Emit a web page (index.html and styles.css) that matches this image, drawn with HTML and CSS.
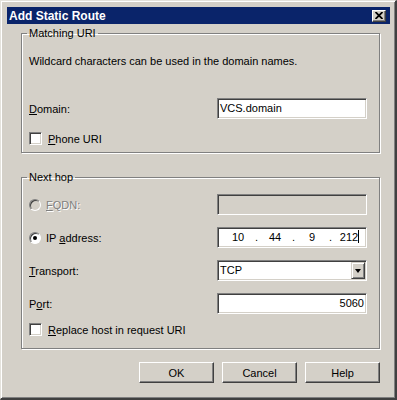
FILE: index.html
```html
<!DOCTYPE html>
<html lang="en">
<head>
    <meta charset="UTF-8">
    <meta name="viewport" content="width=device-width, initial-scale=1.0">
    <title>Add Static Route</title>
    <link rel="stylesheet" href="styles.css">
</head>
<body>
    <div class="window">
        <div class="titlebar">
            <span class="title">Add Static Route</span>
            <span class="close">
                <svg width="8" height="7" viewBox="0 0 8 7">
                    <path d="M0.5 0 L7.5 7 M7.5 0 L0.5 7" stroke="#000" stroke-width="1.8" fill="none"/>
                </svg>
            </span>
        </div>
        <div class="content">
            <fieldset class="group group-uri">
                <legend>Matching URI</legend>
                <p class="note">Wildcard characters can be used in the domain names.</p>
                <div class="row row-domain">
                    <label class="label"><span><u>D</u>omain:</span></label>
                    <div class="field"><span class="value">VCS.domain</span></div>
                </div>
                <label class="check"><span class="box"></span><span><u>P</u>hone URI</span></label>
            </fieldset>

            <fieldset class="group group-hop">
                <legend>Next hop</legend>
                <div class="rows">
                    <div class="row">
                        <label class="label disabled"><span class="radio"></span><span><u>F</u>QDN:</span></label>
                        <div class="field field-disabled"></div>
                    </div>
                    <div class="row">
                        <label class="label"><span class="radio"><span class="dot"></span></span><span>IP <u>a</u>ddress:</span></label>
                        <div class="field ip">
                            <span class="octet">10</span><span class="sep">.</span>
                            <span class="octet">44</span><span class="sep">.</span>
                            <span class="octet">9</span><span class="sep">.</span>
                            <span class="octet">212<span class="caret"></span></span>
                        </div>
                    </div>
                    <div class="row">
                        <label class="label"><span><u>T</u>ransport:</span></label>
                        <div class="field select">
                            <span class="value">TCP</span>
                            <span class="drop"><span class="arrow"></span></span>
                        </div>
                    </div>
                    <div class="row">
                        <label class="label"><span>P<u>o</u>rt:</span></label>
                        <div class="field number"><span class="value">5060</span></div>
                    </div>
                </div>
                <label class="check check-replace"><span class="box"></span><span><u>R</u>eplace host in request URI</span></label>
            </fieldset>

            <div class="buttons">
                <button class="btn">OK</button>
                <button class="btn">Cancel</button>
                <button class="btn">Help</button>
            </div>
        </div>
    </div>
</body>
</html>
```

FILE: styles.css
```css
body {
    margin: 0;
    background: #d4d0c8;
    font-family: "Liberation Sans", Arial, sans-serif;
    font-size: 11px;
    color: #000;
}
.window {
    width: 397px;
    height: 400px;
    box-sizing: border-box;
    background: #d4d0c8;
    border-style: solid;
    border-width: 1px 2px 2px 1px;
    border-color: #e4e2dc #404040 #404040 #e4e2dc;
    box-shadow: inset 1px 1px #fff, inset -1px -1px #808080;
    padding: 6px 5px 0 6px;
}
.titlebar {
    height: 17px;
    background: #0a246a;
    display: flex;
    align-items: center;
    justify-content: space-between;
    padding: 0 4px 0 2px;
}
.title {
    color: #fff;
    font-weight: bold;
    font-size: 12px;
}
.close {
    width: 14px;
    height: 12px;
    box-sizing: border-box;
    background: #d4d0c8;
    border: 1px solid;
    border-color: #fff #404040 #404040 #fff;
    box-shadow: inset -1px -1px #808080;
    display: flex;
    align-items: center;
    justify-content: center;
}
.content {
    padding: 0 10px 0 14px;
}
.group {
    margin: 3px 0 0;
    padding: 15px 11px 7px 7px;
    border: 1px solid #808080;
    box-shadow: 1px 1px 0 #fff, inset 1px 1px 0 #fff;
    min-width: 0;
}
.group legend {
    margin-left: -2px;
    padding: 0 2px;
    line-height: 13px;
}
.group-hop {
    margin-top: 18px;
    padding: 10px 11px 12px 7px;
}
.note {
    margin: 0;
    line-height: 13px;
}
.rows {
    display: grid;
    row-gap: 12px;
}
.row {
    display: grid;
    grid-template-columns: 188px 150px;
    align-items: center;
    height: 21px;
}
.row-domain {
    margin-top: 30px;
}
.label {
    display: flex;
    align-items: center;
    gap: 5px;
}
.disabled {
    color: #808080;
    text-shadow: 1px 1px #fff;
}
.radio {
    width: 12px;
    height: 12px;
    box-sizing: border-box;
    border-radius: 50%;
    border: 1px solid;
    border-color: #808080 #fff #fff #808080;
    box-shadow: inset 1px 1px #404040;
    background: #fff;
    display: flex;
    align-items: center;
    justify-content: center;
}
.disabled .radio {
    background: #d4d0c8;
}
.dot {
    width: 4px;
    height: 4px;
    border-radius: 50%;
    background: #000;
}
.field {
    height: 21px;
    box-sizing: border-box;
    border: 1px solid;
    border-color: #808080 #fff #fff #808080;
    box-shadow: inset 1px 1px #404040, inset -1px -1px #d4d0c8;
    background: #fff;
    padding: 0 2px;
    line-height: 19px;
    display: flex;
    align-items: center;
}
.field-disabled {
    background: #d4d0c8;
}
.ip {
    padding-left: 5px;
}
.octet {
    width: 30px;
    text-align: center;
}
.sep {
    width: 7px;
    text-align: center;
}
.caret {
    display: inline-block;
    width: 1px;
    height: 13px;
    background: #000;
    vertical-align: -2px;
    margin-right: -1px;
}
.select {
    justify-content: space-between;
    padding: 0 1px 0 2px;
}
.drop {
    width: 14px;
    height: 17px;
    box-sizing: border-box;
    background: #d4d0c8;
    border: 1px solid;
    border-color: #d4d0c8 #404040 #404040 #d4d0c8;
    box-shadow: inset 1px 1px #fff, inset -1px -1px #808080;
    display: flex;
    align-items: center;
    justify-content: center;
}
.arrow {
    width: 0;
    height: 0;
    border-left: 3.5px solid transparent;
    border-right: 3.5px solid transparent;
    border-top: 4px solid #000;
}
.number {
    justify-content: flex-end;
}
.check {
    display: flex;
    align-items: center;
    gap: 6px;
    height: 13px;
    margin-top: 13px;
}
.check-replace {
    margin-top: 9px;
}
.box {
    width: 13px;
    height: 13px;
    box-sizing: border-box;
    border: 1px solid;
    border-color: #808080 #fff #fff #808080;
    box-shadow: inset 1px 1px #404040, inset -1px -1px #d4d0c8;
    background: #fff;
}
.buttons {
    display: flex;
    justify-content: flex-end;
    gap: 8px;
    margin-top: 13px;
}
.btn {
    width: 75px;
    height: 21px;
    box-sizing: border-box;
    background: #d4d0c8;
    border: 1px solid;
    border-color: #fff #404040 #404040 #fff;
    box-shadow: inset -1px -1px #808080;
    font-family: inherit;
    font-size: 11px;
    color: #000;
    padding: 0;
}
```
